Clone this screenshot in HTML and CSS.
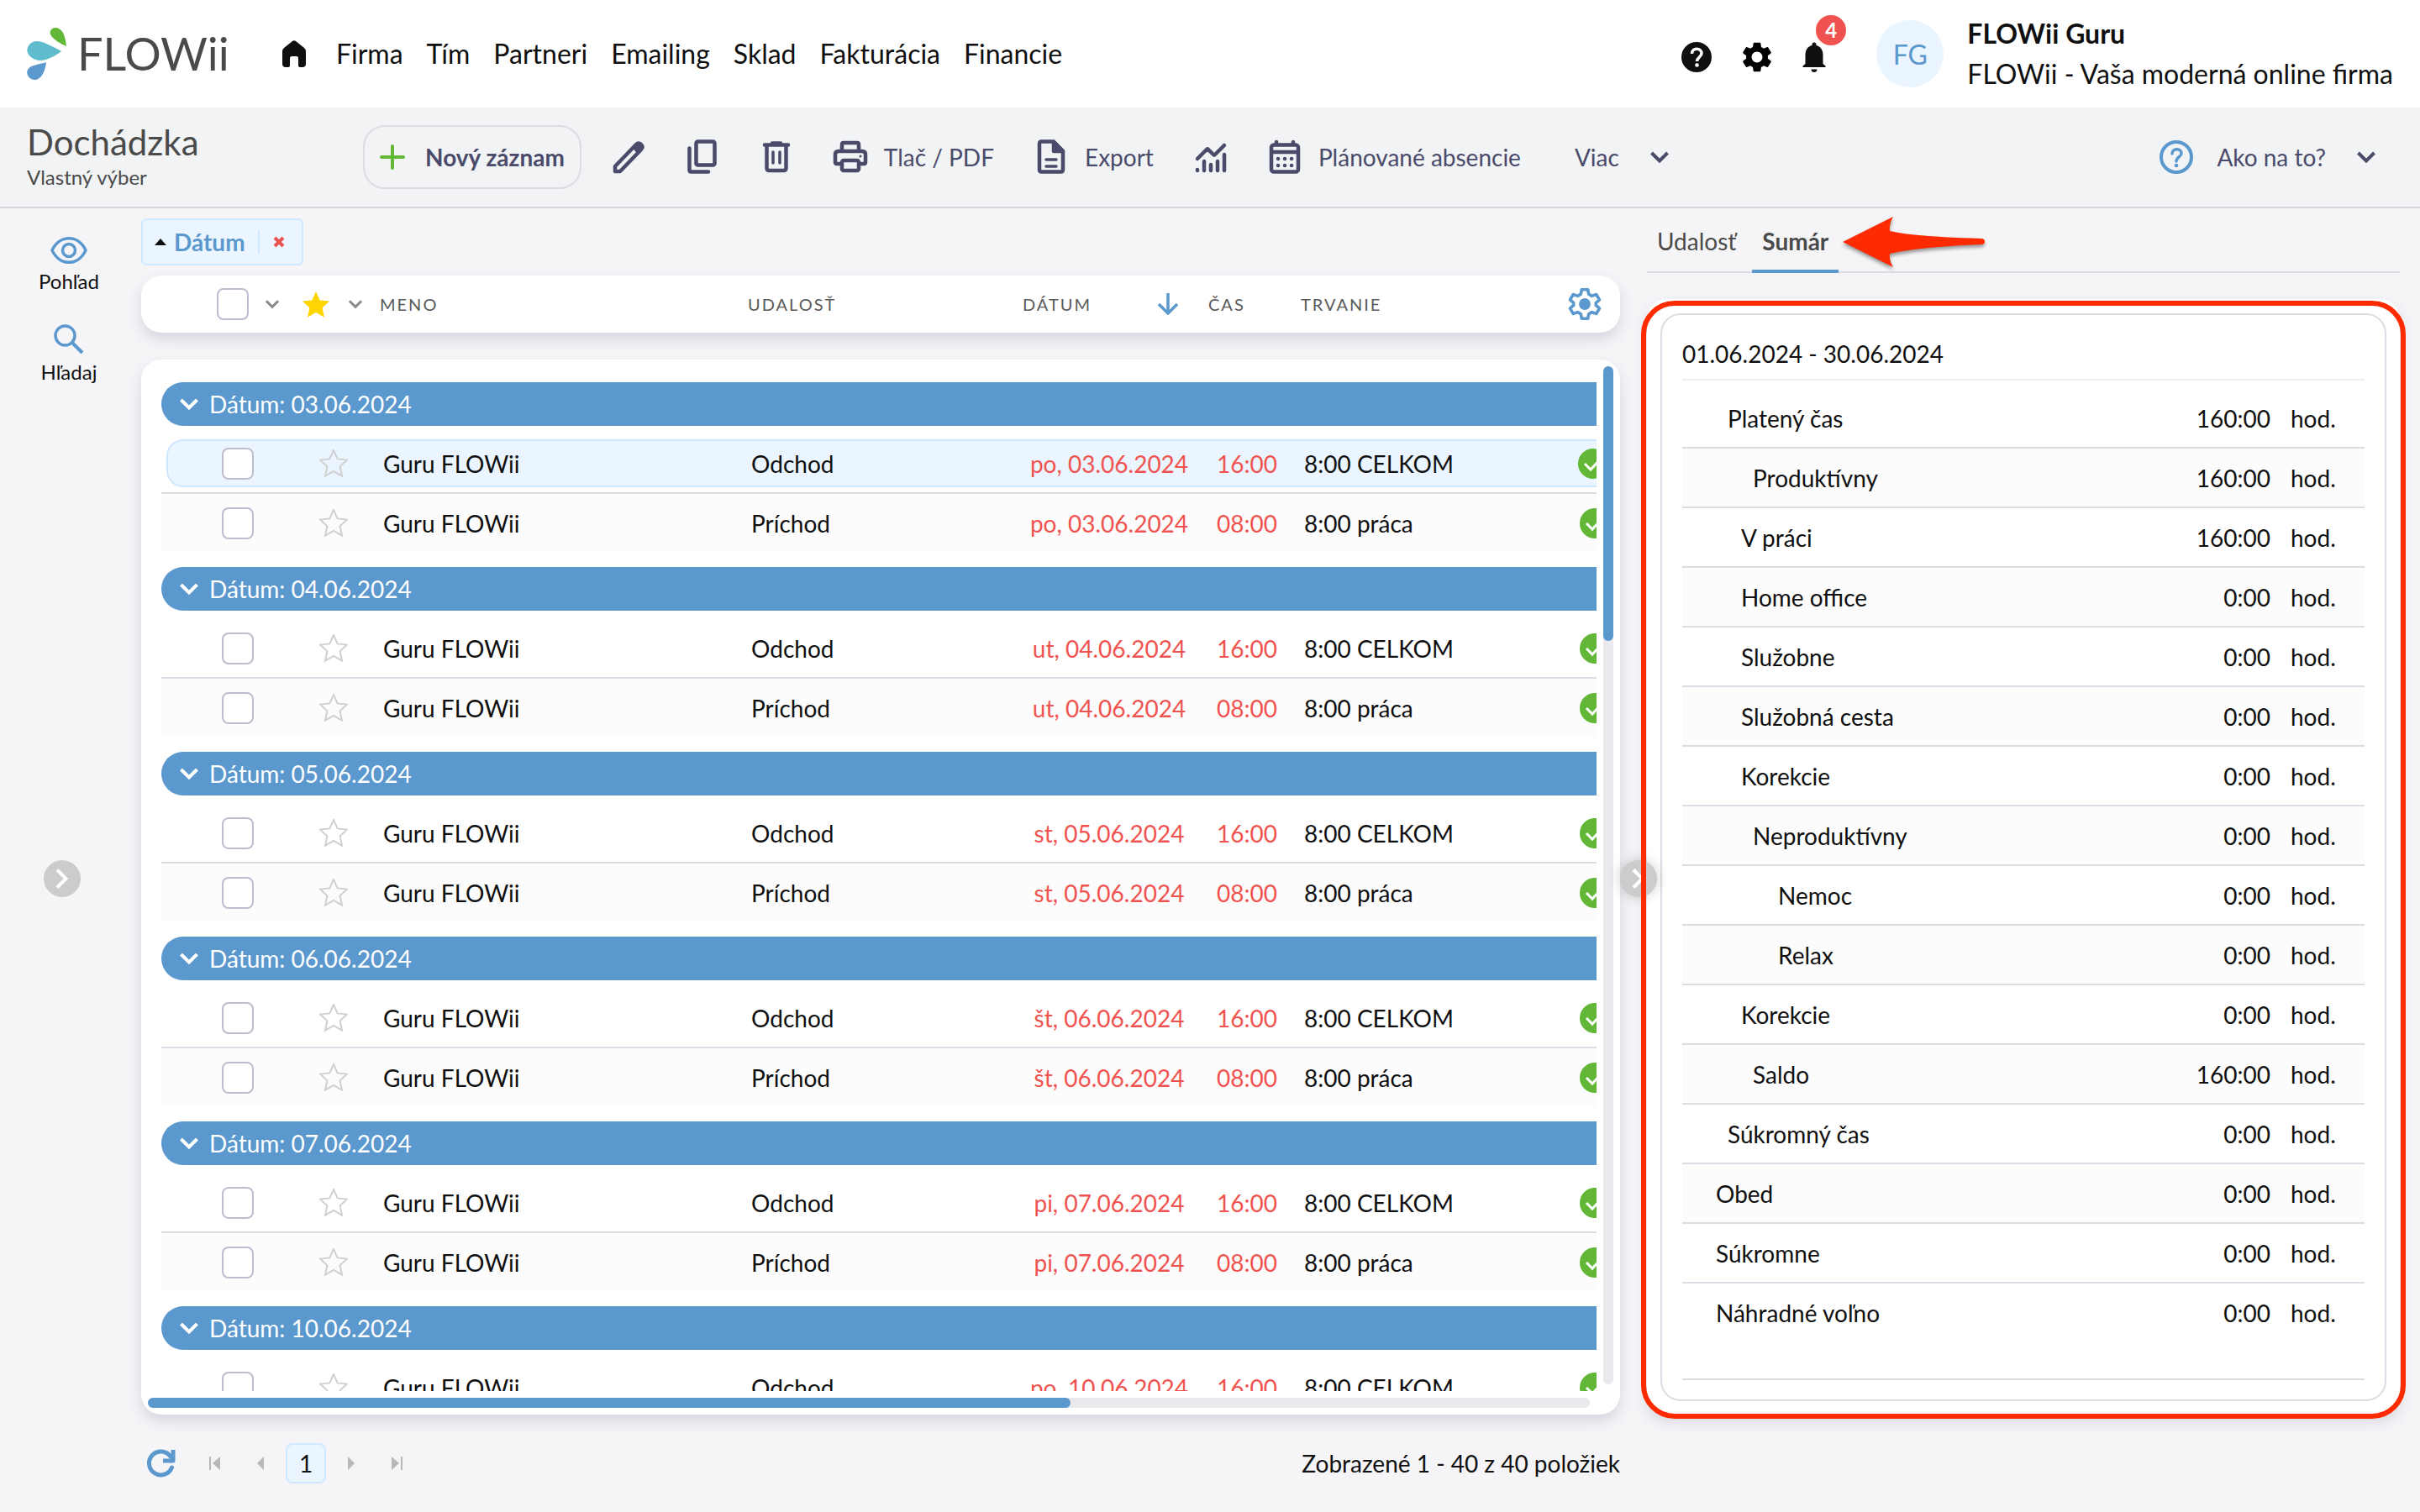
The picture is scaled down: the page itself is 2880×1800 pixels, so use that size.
FILE: index.html
```html
<!DOCTYPE html>
<html lang="sk">
<head>
    <meta charset="UTF-8">
    <meta name="viewport" content="width=device-width, initial-scale=1.0">
    <title>Dochádzka</title>
    <link rel="stylesheet" href="styles.css">
</head>
<body>
    <!-- zdieľané ikony -->
    <svg class="sprite" aria-hidden="true">
        <symbol id="i-star" viewBox="0 0 34 33"><path d="M17 1l4.7 10.4 11.3 1.2-8.4 7.7 2.4 11.4L17 25.9 7 31.7l2.4-11.4L1 12.6l11.3-1.2z"/></symbol>
        <symbol id="i-chevron" viewBox="0 0 24 16"><path d="M2.5 3l9.5 9.5L21.5 3" fill="none" stroke="currentColor" stroke-width="4"/></symbol>
        <symbol id="i-check" viewBox="0 0 36 36"><circle cx="18" cy="18" r="18" fill="#62b836"/><path d="M8 18l7 7 13-14" fill="none" stroke="#fff" stroke-width="3"/></symbol>
        <symbol id="i-gear" viewBox="2 2 20 20"><path d="M19.14 12.94c.04-.3.06-.61.06-.94 0-.32-.02-.64-.07-.94l2.03-1.58c.18-.14.23-.41.12-.61l-1.92-3.32c-.12-.22-.37-.29-.59-.22l-2.39.96c-.5-.38-1.03-.7-1.62-.94l-.36-2.54c-.04-.24-.24-.41-.48-.41h-3.84c-.24 0-.43.17-.47.41l-.36 2.54c-.59.24-1.13.57-1.62.94l-2.39-.96c-.22-.08-.47 0-.59.22L2.74 8.87c-.12.21-.08.47.12.61l2.03 1.58c-.05.3-.09.63-.09.94s.02.64.07.94l-2.03 1.58c-.18.14-.23.41-.12.61l1.92 3.32c.12.22.37.29.59.22l2.39-.96c.5.38 1.03.7 1.62.94l.36 2.54c.05.24.24.41.48.41h3.84c.24 0 .44-.17.47-.41l.36-2.54c.59-.24 1.13-.56 1.62-.94l2.39.96c.22.08.47 0 .59-.22l1.92-3.32c.12-.22.07-.47-.12-.61l-2.01-1.58zM12 15.6c-1.98 0-3.6-1.62-3.6-3.6s1.62-3.6 3.6-3.6 3.6 1.62 3.6 3.6-1.62 3.6-3.6 3.6z"/></symbol>
    </svg>

    <header class="topbar">
        <a class="logo" href="#">
            <svg width="48" height="62" viewBox="0 0 48 62">
                <path d="M47 22C40 19 31 14 28 8c-2-6 5-10 10-7 6 3 8 12 9 21z" fill="#62b836"/>
                <path d="M41 28C33 34 20 42 10 38-1 33-2 25 4 19c5-5 13-3 19 0 7 3 13 6 18 9z" fill="#5fbccd"/>
                <path d="M23 41c-1 8-4 19-12 21C4 63-2 56 1 50c3-6 14-6 22-9z" fill="#5b98ce"/>
            </svg>
            <span class="logo-text">FLOWii</span>
        </a>
        <nav class="nav">
            <a class="home" href="#" aria-label="Domov">
                <svg width="28" height="32" viewBox="0 0 28 32"><path d="M12 1q2-1.5 4 0l10 8q2 1.5 2 4v15q0 4-4 4h-3q-2 0-2-2v-8q0-3-2-3h-6q-2 0-2 3v8q0 2-2 2H4q-4 0-4-4V13q0-2.500 2-4z" fill="#0f0f0f"/></svg>
            </a>
            <a href="#">Firma</a>
            <a href="#">Tím</a>
            <a href="#">Partneri</a>
            <a href="#">Emailing</a>
            <a href="#">Sklad</a>
            <a href="#">Fakturácia</a>
            <a href="#">Financie</a>
        </nav>
        <div class="top-icons">
            <button type="button" aria-label="Pomoc">
                <svg width="36" height="36" viewBox="0 0 36 36"><circle cx="18" cy="18" r="18" fill="#0f0f0f"/><path d="M12.5 14c0-8 11.5-7.5 11.5-.5 0 4.500-5.500 4.500-5.500 9.500" fill="none" stroke="#fff" stroke-width="3.5"/><circle cx="18.5" cy="27.5" r="2.3" fill="#fff"/></svg>
            </button>
            <button type="button" aria-label="Nastavenia"><svg width="36" height="36"><use href="#i-gear"/></svg></button>
            <button class="bell" type="button" aria-label="Upozornenia">
                <svg width="28" height="36" viewBox="0 0 28 36"><path d="M11.5 3a2.500 2.500 0 0 1 5 0v1c5 1 8 6 8 11v11l3 2.500V30H.5v-1.500l3-2.500V15c0-5 3-10 8-11zM10.500 32.500h7a3.500 3.500 0 0 1-7 0z" fill="#0f0f0f"/></svg>
                <span class="badge">4</span>
            </button>
        </div>
        <div class="user">
            <span class="avatar">FG</span>
            <div class="user-text">
                <strong>FLOWii Guru</strong>
                <span>FLOWii - Vaša moderná online firma</span>
            </div>
        </div>
    </header>

    <div class="toolbar">
        <div class="page-title">
            <h1>Dochádzka</h1>
            <p>Vlastný výber</p>
        </div>
        <button class="new-record" type="button">
            <svg width="30" height="30" viewBox="0 0 30 30"><path d="M15 2v26M2 15h26" stroke="#62b836" stroke-width="4" stroke-linecap="round"/></svg>
            Nový záznam
        </button>
        <div class="tools">
            <button type="button" aria-label="Upraviť">
                <svg class="ico" viewBox="0 0 48 48"><path d="M8 41v-6L33 9q3-3 6 0t0 6L14 41z" fill="none" stroke="currentColor" stroke-width="4.5" stroke-linejoin="round"/><path d="M28 12l7-6q8 1 7 8l-7 7z" fill="currentColor"/></svg>
            </button>
            <button type="button" aria-label="Kopírovať">
                <svg class="ico" viewBox="0 0 48 48" fill="none" stroke="currentColor" stroke-width="4.5" stroke-linecap="round" stroke-linejoin="round"><rect x="16.5" y="5.5" width="22" height="28" rx="2"/><path d="M8.5 13.5v26q0 2 2 2h20.500"/></svg>
            </button>
            <button type="button" aria-label="Zmazať">
                <svg class="ico" viewBox="0 0 48 48" fill="none" stroke="currentColor" stroke-width="4.5" stroke-linecap="round" stroke-linejoin="round"><path d="M10 9.500h28M19 7.500h10M12.500 10v27q0 3 3 3h17q3 0 3-3V10"/><path d="M20 18v13M28 18v13" stroke-width="3.5"/></svg>
            </button>
            <button class="labeled" type="button">
                <svg class="ico" viewBox="0 0 48 48" fill="none" stroke="currentColor" stroke-width="4.5" stroke-linejoin="round"><path d="M14 16V9q0-2 2-2h16q2 0 2 2v7M12 32H8q-2 0-2-2v-9q0-4 4-4h28q4 0 4 4v9q0 2-2 2h-4"/><rect x="14" y="28" width="20" height="12" rx="2"/><circle cx="36" cy="23" r="1.5" fill="currentColor" stroke="none"/></svg>
                Tlač / PDF
            </button>
            <button class="labeled" type="button">
                <svg class="ico" viewBox="0 0 48 48" fill="none" stroke="currentColor" stroke-width="4.5" stroke-linejoin="round"><path d="M10 8q0-2.500 2.500-2.500H27L38 17v22q0 2.500-2.500 2.500h-23Q10 41.500 10 39z"/><path d="M27 6v11h11z" fill="currentColor"/><path d="M18 27h12M18 35h12" stroke-width="3.5" stroke-linecap="round"/></svg>
                Export
            </button>
            <button type="button" aria-label="Graf">
                <svg class="ico" viewBox="0 0 48 48" fill="none" stroke="currentColor" stroke-width="4.5" stroke-linecap="round" stroke-linejoin="round"><path d="M8 26l11-11q1-1 2 0l6 6q1 1 2 0L40 10M8 39v1M16 29v11M24 33v7M32 29v11M40 21v19"/></svg>
            </button>
            <button type="button" class="labeled">
                <svg class="ico" viewBox="0 0 48 48" fill="none" stroke="currentColor" stroke-width="4.5" stroke-linecap="round"><rect x="8" y="9.5" width="32" height="32" rx="3"/><path d="M9 18h30M14 6v3M34 6v3"/><path d="M16 26h.1M24 26h.1M32 26h.1M16 34h.1M24 34h.1M32 34h.1"/></svg>
                Plánované absencie
            </button>
            <button class="more" type="button">Viac <svg width="24" height="16"><use href="#i-chevron"/></svg></button>
        </div>
        <button class="howto" type="button">
            <svg width="40" height="40" viewBox="0 0 40 40" fill="none" stroke="#5b98ce"><circle cx="20" cy="20" r="18" stroke-width="4"/><path d="M15 16c0-7 11-7 11-.5 0 4.500-6 4.500-6 9.500" stroke-width="3.5" stroke-linecap="round"/><circle cx="20" cy="30" r="2.3" fill="#5b98ce" stroke="none"/></svg>
            <span>Ako na to?</span>
            <svg width="24" height="16"><use href="#i-chevron"/></svg>
        </button>
    </div>

    <main class="layout">
        <aside class="side">
            <a href="#">
                <svg width="44" height="32" viewBox="0 0 44 32" fill="none" stroke="#5b98ce" stroke-width="3.5"><path d="M2 16C11-3 33-3 42 16 33 35 11 35 2 16z"/><circle cx="22" cy="16" r="7.5"/></svg>
                Pohľad
            </a>
            <a href="#">
                <svg width="36" height="36" viewBox="0 0 36 36" fill="none" stroke="#5b98ce"><circle cx="13.5" cy="13.5" r="11.5" stroke-width="3.5"/><path d="M22 22l12 12" stroke-width="4"/></svg>
                Hľadaj
            </a>
            <button class="toggle toggle-left" type="button" aria-label="Rozbaliť panel"><svg width="16" height="24" viewBox="0 0 16 24"><path d="M2 1.500L12.500 12 2 22.500" fill="none" stroke="#fff" stroke-width="4"/></svg></button>
        </aside>

        <section class="list">
            <div class="chip">
                <svg width="14" height="8" viewBox="0 0 14 8"><path d="M0 8l7-8 7 8z" fill="#0f0f0f"/></svg>
                <b>Dátum</b>
                <button type="button" aria-label="Zrušiť zoskupenie"><svg width="14" height="14" viewBox="0 0 14 14"><path d="M2 2l10 10M12 2L2 12" stroke="#eb5350" stroke-width="4"/></svg></button>
            </div>

            <div class="list-head">
                <label class="h-check"><input type="checkbox" aria-label="Označiť všetko"></label>
                <svg class="caret" width="18" height="12" viewBox="0 0 24 16"><use href="#i-chevron"/></svg>
                <svg class="star-full" width="34" height="33"><use href="#i-star"/></svg>
                <svg class="caret" width="18" height="12" viewBox="0 0 24 16"><use href="#i-chevron"/></svg>
                <span>MENO</span>
                <span>UDALOSŤ</span>
                <span>DÁTUM</span>
                <svg width="26" height="26" viewBox="0 0 26 26" fill="none" stroke="#5b98ce" stroke-width="3.5"><path d="M13 0v24M2 13l11 11 11-11"/></svg>
                <span>ČAS</span>
                <span>TRVANIE</span>
                <button type="button" aria-label="Nastavenie stĺpcov">
                    <svg width="40" height="40" viewBox="1 1 22 22"><path d="M10 2.500h4l.6 3 2 1.200 3-1 2 3.500-2.300 2v1.600l2.300 2-2 3.500-3-1-2 1.200-.6 3h-4l-.6-3-2-1.200-3 1-2-3.500 2.300-2v-1.600l-2.300-2 2-3.500 3 1 2-1.200z" fill="none" stroke="#5b98ce" stroke-width="2" stroke-linejoin="round"/><circle cx="12" cy="12" r="3.8" fill="#5b98ce"/></svg>
                </button>
            </div>

            <div class="list-card">
                <div class="scroller">
                    <table class="records" id="records"></table>
                </div>
                <div class="vbar"><div class="vthumb"></div></div>
                <div class="hbar"><div class="hthumb"></div></div>
            </div>

            <footer class="pager">
                <button type="button" aria-label="Obnoviť"><svg width="34" height="34" viewBox="0 0 34 34" fill="none" stroke="#5b98ce" stroke-width="5"><path d="M29.500 22A14 14 0 1 1 28 9" stroke-linecap="round"/><path d="M31 1v13H19" stroke-linejoin="round"/></svg></button>
                <button type="button" aria-label="Prvá strana"><svg width="14" height="16" viewBox="0 0 14 16"><path d="M0 0h2v16H0zM13 0v16L4 8z"/></svg></button>
                <button type="button" aria-label="Predchádzajúca"><svg width="14" height="16" viewBox="0 0 14 16"><path d="M11 0v16L3 8z"/></svg></button>
                <button class="page" type="button">1</button>
                <button type="button" aria-label="Ďalšia"><svg width="14" height="16" viewBox="0 0 14 16"><path d="M3 0v16l8-8z"/></svg></button>
                <button type="button" aria-label="Posledná strana"><svg width="14" height="16" viewBox="0 0 14 16"><path d="M12 0h2v16h-2zM1 0v16l9-8z"/></svg></button>
                <span class="count">Zobrazené 1 - 40 z 40 položiek</span>
            </footer>
        </section>

        <section class="detail">
            <div class="tabs">
                <button type="button">Udalosť</button>
                <button class="active" type="button">Sumár</button>
                <svg class="arrow" width="170" height="64" viewBox="0 0 170 64"><path d="M0 30L60 0q-5 9-4 17 30 7 109 9 4 0 4 3.500T165 33q-75 3-109 11-1 8 4 16z" fill="#ff2b00"/></svg>
            </div>
            <div class="summary-card">
                <div class="summary">
                    <h2>01.06.2024 - 30.06.2024</h2>
                    <table id="summary"></table>
                </div>
                <button class="toggle toggle-right" type="button" aria-label="Zbaliť panel"><svg width="16" height="24" viewBox="0 0 16 24"><path d="M2 1.500L12.500 12 2 22.500" fill="none" stroke="#fff" stroke-width="4"/></svg></button>
                <div class="frame"></div>
            </div>
        </section>
    </main>
    <script src="script.js"></script>
</body>
</html>
```
FILE: styles.css
```css
* {
    box-sizing: border-box;
}

body {
    margin: 0;
    height: 100vh;
    display: flex;
    flex-direction: column;
    overflow: hidden;
    background-color: #f5f5f8;
    color: #0f0f0f;
    font-family: Lato, "Noto Sans", sans-serif;
    font-size: 28px;
    line-height: 36px;
}

h1, h2, p {
    margin: 0;
    font-weight: 400;
}

a {
    color: inherit;
    text-decoration: none;
}

button {
    display: flex;
    align-items: center;
    border: 0;
    padding: 0;
    background: none;
    color: inherit;
    font: inherit;
    white-space: nowrap;
    cursor: pointer;
}

svg {
    display: block;
    flex: none;
}

.sprite {
    position: absolute;
    width: 0;
    height: 0;
}

input[type="checkbox"] {
    appearance: none;
    display: block;
    width: 38px;
    height: 38px;
    margin: 0;
    border: 2px solid #c0bcd0;
    border-radius: 8px;
    background-color: #fff;
}

/* horná lišta */
.topbar {
    display: flex;
    align-items: center;
    height: 128px;
    padding: 0 32px;
    background-color: #fff;
    flex: none;
}

.logo {
    display: flex;
    align-items: center;
    gap: 12px;
    width: 304px;
}

.logo-text {
    font-size: 54px;
    line-height: 64px;
    color: #4a4a4a;
}

.nav {
    display: flex;
    align-items: center;
    gap: 28px;
    flex: 1;
    font-size: 32px;
}

.home {
    margin-right: 8px;
}

.top-icons {
    display: flex;
    align-items: center;
    gap: 36px;
    padding-top: 8px;
}

.bell {
    position: relative;
}

.badge {
    position: absolute;
    left: 16px;
    top: -32px;
    width: 36px;
    height: 36px;
    border-radius: 50%;
    background-color: #f0534f;
    color: #fff;
    font-size: 24px;
    font-weight: 700;
}

.user {
    display: flex;
    align-items: center;
    gap: 28px;
    margin-left: 60px;
}

.avatar {
    width: 80px;
    height: 80px;
    border-radius: 50%;
    background-color: #eaf5ff;
    color: #5b98ce;
    font-size: 32px;
    line-height: 82px;
    text-align: center;
}

.user-text {
    display: flex;
    flex-direction: column;
    gap: 12px;
    font-size: 32px;
}

/* panel nástrojov */
.toolbar {
    display: flex;
    align-items: center;
    height: 120px;
    padding: 0 52px 0 32px;
    border-bottom: 2px solid #d3d5d9;
    background-color: #f1f3f5;
    color: #4a4a6a;
    flex: none;
}

.page-title {
    width: 400px;
    color: #4a4a4a;
    font-size: 24px;
}

.page-title h1 {
    font-size: 42px;
    line-height: 48px;
}

.new-record {
    gap: 24px;
    height: 76px;
    padding: 0 18px;
    margin-right: 32px;
    border: 2px solid #dcdce4;
    border-radius: 26px;
    font-weight: 700;
}

.tools {
    display: flex;
    align-items: center;
    gap: 40px;
    flex: 1;
}

.ico {
    width: 48px;
    height: 48px;
}

.labeled {
    gap: 16px;
    margin-right: 4px;
}

.more {
    gap: 36px;
    margin-left: 20px;
}

.howto {
    gap: 28px;
}

.howto span {
    margin-right: 8px;
}

/* rozloženie */
.layout {
    display: grid;
    grid-template-columns: 168px 55fr 29fr;
    flex: 1;
    min-height: 0;
    padding-right: 24px;
}

.side {
    position: relative;
    display: flex;
    flex-direction: column;
    gap: 33px;
    padding: 34px 4px 0 0;
    font-size: 24px;
}

.side a {
    display: flex;
    flex-direction: column;
    align-items: center;
    gap: 3px;
}

.toggle {
    position: absolute;
    justify-content: center;
    width: 44px;
    height: 44px;
    border-radius: 50%;
    background-color: #ccc;
}

.toggle-left {
    left: 52px;
    top: 50%;
}

.toggle-right {
    left: -32px;
    top: calc(50% + 4px);
    box-shadow: 0 0 16px rgba(0, 0, 0, 0.2);
}

.list {
    display: flex;
    flex-direction: column;
    min-width: 0;
    min-height: 0;
    padding-top: 12px;
}

.chip {
    display: flex;
    align-items: center;
    align-self: flex-start;
    gap: 9px;
    height: 56px;
    padding-left: 14px;
    border: 2px solid #d0e8ff;
    border-radius: 6px;
    background-color: #eaf5ff;
    color: #5b98ce;
}

.chip button {
    height: 28px;
    padding: 0 20px 0 16px;
    margin-left: 6px;
    border-left: 2px solid #d0e8ff;
}

.list-head,
.list-card,
.summary-card {
    border-radius: 24px;
    background-color: #fff;
    box-shadow: 0 8px 16px rgba(74, 74, 106, 0.18);
}

.list-head {
    display: grid;
    grid-template-columns: 57px 44px 55px 38px 438px 327px 160px 61px 110px 1fr 40px;
    align-items: center;
    height: 68px;
    padding: 0 22px 0 90px;
    margin: 12px 0 32px;
    color: #5a5a5a;
    font-size: 20px;
    letter-spacing: 2px;
}

.caret {
    color: #8a8a8a;
}

.star-full {
    fill: #ffd500;
}

.list-card {
    display: grid;
    grid-template-columns: minmax(0, 1fr) 12px;
    grid-template-rows: minmax(0, 1fr) 12px;
    gap: 8px;
    flex: 1;
    min-height: 0;
    padding: 8px;
}

.scroller {
    overflow: hidden;
    padding: 19px 0 0 16px;
}

.vbar,
.hbar {
    border-radius: 6px;
    background-color: #eaeaee;
}

.vbar {
    margin-bottom: 8px;
}

.hbar {
    margin-right: 8px;
}

.vthumb,
.hthumb {
    border-radius: 6px;
    background-color: #5b98ce;
}

.vthumb {
    height: 27%;
}

.hthumb {
    width: 64%;
    height: 12px;
}

/* tabuľka záznamov, širšia než viditeľná oblasť */
.records {
    display: block;
    width: calc(100% + 60px);
}

.records tbody {
    display: block;
    margin-bottom: 18px;
}

.records tr {
    display: grid;
    grid-template-columns: 116px 76px 438px 310px 232px 96px 1fr 80px;
    align-items: center;
    height: 69px;
    padding-left: 72px;
}

.records td,
.records th {
    padding: 0;
    font-weight: 400;
    text-align: left;
}

.records .group {
    display: block;
    height: 52px;
    padding-left: 21px;
    margin-bottom: 10px;
    border-radius: 26px;
    background-color: #5b98ce;
    color: #fff;
}

.group th {
    display: flex;
    align-items: center;
    gap: 12px;
    height: 52px;
}

.records .in {
    height: 71px;
    border-top: 2px solid #dcdce4;
    background-color: #fcfcfc;
}

.records .selected {
    height: 57px;
    margin: 16px 0 6px 6px;
    padding-left: 64px;
    border: 2px solid #d0e8ff;
    border-radius: 20px;
    background-color: #eaf5ff;
}

.star {
    fill: none;
    stroke: #d0d0d0;
    stroke-width: 2;
}

.records .red {
    color: #f0534f;
    text-align: center;
}

.records .dur {
    padding-left: 20px;
}

/* stránkovanie */
.pager {
    display: flex;
    align-items: center;
    gap: 40px;
    height: 48px;
    padding-left: 7px;
    margin: 34px 0;
    flex: none;
}

.pager svg {
    fill: #b8b8b8;
}

.pager button:first-child svg {
    fill: none;
}

.pager .page {
    justify-content: center;
    width: 48px;
    height: 48px;
    margin: 0 -17px;
    border: 2px solid #d0e8ff;
    border-radius: 8px;
    background-color: #eaf5ff;
}

.count {
    margin-left: auto;
}

/* pravý panel */
.detail {
    display: flex;
    flex-direction: column;
    min-height: 0;
    padding-left: 32px;
}

.tabs {
    position: relative;
    display: flex;
    gap: 7px;
    height: 77px;
    border-bottom: 2px solid #dcdce4;
    color: #4a4a4a;
    flex: none;
}

.tabs button {
    height: 77px;
    padding: 0 12px;
}

.tabs .active {
    border-bottom: 4px solid #5b98ce;
    padding-top: 4px;
    font-weight: 700;
}

.arrow {
    position: absolute;
    left: 233px;
    top: 10px;
    filter: drop-shadow(0 3px 2px rgba(0, 0, 0, 0.4));
}

.summary-card {
    position: relative;
    flex: 1;
    margin: 31px 0 116px;
    padding: 17px 16px 16px;
}

.frame {
    position: absolute;
    inset: 2px -7px -5px;
    border: 6px solid #ff2b00;
    border-radius: 40px;
    pointer-events: none;
}

.summary {
    height: 100%;
    padding: 28px 24px 0;
    border: 2px solid #dcdce4;
    border-radius: 24px;
}

.summary h2 {
    height: 50px;
    margin-bottom: 10px;
    border-bottom: 2px solid #f0f0f0;
    font-size: 28px;
}

.summary table {
    width: 100%;
    border-spacing: 0;
}

.summary td {
    height: 71px;
    padding: 0;
    border-bottom: 2px solid #dcdce4;
}

.summary tr:nth-child(even) td {
    background-color: #fcfcfc;
}

.summary .value {
    text-align: right;
}

.summary .unit {
    width: 112px;
    padding-left: 24px;
}

.summary tr:last-child td {
    height: 115px;
    padding-bottom: 44px;
    background: none;
}

.summary .level-1 { padding-left: 40px; }
.summary .level-2 { padding-left: 54px; }
.summary .level-3 { padding-left: 70px; }
.summary .level-4 { padding-left: 84px; }
.summary .level-5 { padding-left: 114px; }
```
FILE: script.js
```js
// deň, dátum, príchod (ak už je načítaný)
const days = [
    ['po', '03.06.2024', '08:00'],
    ['ut', '04.06.2024', '08:00'],
    ['st', '05.06.2024', '08:00'],
    ['št', '06.06.2024', '08:00'],
    ['pi', '07.06.2024', '08:00'],
    ['po', '10.06.2024', '']
];

function recordRow(cls, event, date, time, duration) {
    return `<tr class="${cls}">
        <td><input type="checkbox" aria-label="Označiť ${event} ${date}"></td>
        <td><svg class="star" width="34" height="33"><use href="#i-star"/></svg></td>
        <td>Guru FLOWii</td>
        <td>${event}</td>
        <td class="red">${date}</td>
        <td class="red">${time}</td>
        <td class="dur">${duration}</td>
        <td><svg width="36" height="36"><use href="#i-check"/></svg></td>
    </tr>`;
}

document.getElementById('records').innerHTML = days.map(([day, date, arrival], i) => `<tbody>
    <tr class="group"><th><svg width="24" height="16"><use href="#i-chevron"/></svg>Dátum: ${date}</th></tr>
    ${recordRow(i === 0 ? 'selected' : 'out', 'Odchod', day + ', ' + date, '16:00', '8:00 CELKOM')}
    ${arrival ? recordRow('in', 'Príchod', day + ', ' + date, arrival, '8:00 práca') : ''}
</tbody>`).join('');

// názov, úroveň odsadenia, hodiny
const summary = [
    ['Platený čas', 2, '160:00'],
    ['Produktívny', 4, '160:00'],
    ['V práci', 3, '160:00'],
    ['Home office', 3, '0:00'],
    ['Služobne', 3, '0:00'],
    ['Služobná cesta', 3, '0:00'],
    ['Korekcie', 3, '0:00'],
    ['Neproduktívny', 4, '0:00'],
    ['Nemoc', 5, '0:00'],
    ['Relax', 5, '0:00'],
    ['Korekcie', 3, '0:00'],
    ['Saldo', 4, '160:00'],
    ['Súkromný čas', 2, '0:00'],
    ['Obed', 1, '0:00'],
    ['Súkromne', 1, '0:00'],
    ['Náhradné voľno', 1, '0:00']
];

document.getElementById('summary').innerHTML = '<tbody>' + summary.map(([name, level, value]) =>
    `<tr><td class="level-${level}">${name}</td><td class="value">${value}</td><td class="unit">hod.</td></tr>`
).join('') + '</tbody>';
```
